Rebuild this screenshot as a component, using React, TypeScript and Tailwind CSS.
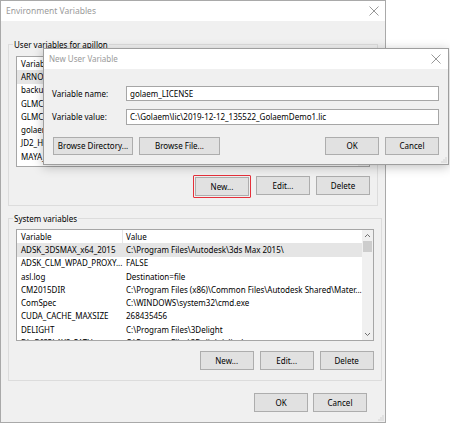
import React from 'react';

const font = { fontFamily: '"Noto Sans", "Segoe UI", Arial, sans-serif' };

type Row = { name: string; value: string };

const userRows: Row[] = [
  { name: 'ARNOLD_LICENSE', value: '5053@localhost' },
  { name: 'backup', value: 'D:\\backup' },
  { name: 'GLMCROWD_LICENSE', value: 'C:\\Golaem\\lic' },
  { name: 'GLMCROWD_HOME', value: 'C:\\Program Files\\Golaem' },
  { name: 'golaem_LICENSE', value: 'C:\\Golaem\\lic' },
  { name: 'JD2_HOME', value: 'C:\\Program Files\\JDownloader' },
  { name: 'MAYA_APP_DIR', value: 'C:\\Users\\apillon\\Documents\\maya' },
  { name: 'MAYA_UI_USE_UBA_CELLS', value: '0' },
];

const systemRows: Row[] = [
  { name: 'ADSK_3DSMAX_x64_2015', value: 'C:\\Program Files\\Autodesk\\3ds Max 2015\\' },
  { name: 'ADSK_CLM_WPAD_PROXY...', value: 'FALSE' },
  { name: 'asl.log', value: 'Destination=file' },
  { name: 'CM2015DIR', value: 'C:\\Program Files (x86)\\Common Files\\Autodesk Shared\\Mater...' },
  { name: 'ComSpec', value: 'C:\\WINDOWS\\system32\\cmd.exe' },
  { name: 'CUDA_CACHE_MAXSIZE', value: '268435456' },
  { name: 'DELIGHT', value: 'C:\\Program Files\\3Delight' },
  { name: 'DL_DISPLAYS_PATH', value: 'C:\\Program Files\\3Delight\\displays' },
];

function CloseIcon() {
  return (
    <svg width="10" height="10" viewBox="0 0 10 10" className="text-[#8c8c8c]">
      <path d="M0.5 0.5 L9.5 9.5 M9.5 0.5 L0.5 9.5" stroke="currentColor" strokeWidth="0.9" fill="none" />
    </svg>
  );
}

function Grip({ className }: { className: string }) {
  return (
    <svg width="6" height="6" viewBox="0 0 6 6" className={className}>
      <rect x="4.5" y="0.5" width="1" height="1" fill="#b5b5b5" />
      <rect x="2.5" y="2.5" width="1" height="1" fill="#b5b5b5" />
      <rect x="4.5" y="2.5" width="1" height="1" fill="#b5b5b5" />
      <rect x="0.5" y="4.5" width="1" height="1" fill="#b5b5b5" />
      <rect x="2.5" y="4.5" width="1" height="1" fill="#b5b5b5" />
      <rect x="4.5" y="4.5" width="1" height="1" fill="#b5b5b5" />
    </svg>
  );
}

function Button({ label, className = '' }: { label: string; className?: string }) {
  return (
    <div
      className={`flex items-center justify-center bg-[#e1e1e1] border border-[#adadad] text-[8px] text-black ${className}`}
    >
      {label}
    </div>
  );
}

function Chevron({ up }: { up?: boolean }) {
  return (
    <svg width="7" height="5" viewBox="0 0 7 5">
      <path d={up ? 'M1 4 L3.5 1.5 L6 4' : 'M1 1 L3.5 3.5 L6 1'} stroke="#606060" strokeWidth="0.9" fill="none" />
    </svg>
  );
}

function VarList({ rows, height }: { rows: Row[]; height: string }) {
  return (
    <div className={`flex bg-white border border-[#a6a6a6] overflow-hidden ${height}`}>
      <div className="flex-1 flex flex-col overflow-hidden">
        <div className="flex h-[13.3px] items-center shrink-0">
          <div className="w-[106px] pl-[4px] h-full flex items-center border-r border-[#e5e5e5]">Variable</div>
          <div className="pl-[3px]">Value</div>
        </div>
        {rows.map((r, i) => (
          <div
            key={r.name}
            className={`flex h-[13.3px] items-center shrink-0 whitespace-nowrap ${i === 0 ? 'bg-[#e5e5e5]' : ''}`}
          >
            <div className="w-[106px] pl-[4px] overflow-hidden">{r.name}</div>
            <div className="pl-[3px]">{r.value}</div>
          </div>
        ))}
      </div>
      <div className="w-[11px] flex flex-col bg-[#f0f0f0] shrink-0">
        <div className="h-[11px] flex items-center justify-center">
          <Chevron up />
        </div>
        <div className="flex-1 flex flex-col items-center">
          <div className="w-[9px] h-[11px] bg-[#cdcdcd]" />
        </div>
        <div className="h-[11px] flex items-center justify-center">
          <Chevron />
        </div>
      </div>
    </div>
  );
}

function ButtonRow({ highlight }: { highlight?: boolean }) {
  return (
    <div className="flex justify-end gap-[6px]">
      {highlight ? (
        <div className="p-[1px] -m-[1px] border-[1.5px] border-[#e5303a] rounded-[1px]">
          <Button label="New..." className="w-[54px] h-[19px]" />
        </div>
      ) : (
        <Button label="New..." className="w-[54px] h-[19px]" />
      )}
      <Button label="Edit..." className="w-[54px] h-[19px]" />
      <Button label="Delete" className="w-[54px] h-[19px]" />
    </div>
  );
}

function NewUserVariableDialog() {
  return (
    <div className="absolute left-[43px] top-[48px] w-[406px] h-[117px] flex flex-col bg-[#f0f0f0] border border-[#9e9e9e] shadow-[0_2px_10px_rgba(0,0,0,0.25)]">
      <div className="h-[20px] bg-white flex items-center justify-between pl-[5px] pr-[7px] shrink-0">
        <span className="text-[#9a9a9a]">New User Variable</span>
        <CloseIcon />
      </div>
      <div className="flex flex-col pl-[8px] pr-[9px] pt-[17px]">
        <div className="flex items-center h-[15px]">
          <div className="w-[74px]">Variable name:</div>
          <div className="flex-1 h-full bg-white border border-[#a6a6a6] flex items-center pl-[3px]">golaem_LICENSE</div>
        </div>
        <div className="flex items-center h-[16px] mt-[8px]">
          <div className="w-[74px]">Variable value:</div>
          <div className="flex-1 h-full bg-white border border-[#a6a6a6] flex items-center pl-[3px]">
            C:\Golaem\lic\2019-12-12_135522_GolaemDemo1.lic
          </div>
        </div>
        <div className="flex mt-[12px] gap-[6px]">
          <Button label="Browse Directory..." className="w-[80px] h-[18px] ml-[1px]" />
          <Button label="Browse File..." className="w-[81px] h-[18px]" />
          <div className="flex-1" />
          <Button label="OK" className="w-[54px] h-[18px]" />
          <Button label="Cancel" className="w-[54px] h-[18px]" />
        </div>
      </div>
      <Grip className="absolute right-[1px] bottom-[1px]" />
    </div>
  );
}

export default function App() {
  return (
    <div className="relative w-[450px] h-[425px] bg-white text-[8px] text-black overflow-hidden" style={font}>
      <div className="relative w-[386px] h-[423px] flex flex-col bg-[#f0f0f0] border border-[#a9a9a9]">
        {/* Title bar */}
        <div className="h-[20px] bg-white flex items-center justify-between pl-[5px] pr-[6px] shrink-0">
          <span className="text-[#9a9a9a] text-[8.5px]">Environment Variables</span>
          <CloseIcon />
        </div>

        <div className="flex flex-col px-[7px] pt-[18px]">
          {/* User variables */}
          <fieldset className="border border-[#dcdcdc] px-[7px] pb-[8px]">
            <legend className="-ml-[3px] px-[1px] leading-[11px]">User variables for apillon</legend>
            <div className="mt-[6px]">
              <VarList rows={userRows} height="h-[111px]" />
            </div>
            <div className="mt-[9px]">
              <ButtonRow highlight />
            </div>
          </fieldset>

          {/* System variables */}
          <fieldset className="border border-[#dcdcdc] px-[7px] pb-[10px] mt-[7px]">
            <legend className="-ml-[3px] px-[1px] leading-[11px]">System variables</legend>
            <div className="mt-[5px]">
              <VarList rows={systemRows} height="h-[112px]" />
            </div>
            <div className="mt-[10px]">
              <ButtonRow />
            </div>
          </fieldset>

          <div className="flex justify-end gap-[5px] mt-[12px] pr-[11px]">
            <Button label="OK" className="w-[54px] h-[19px]" />
            <Button label="Cancel" className="w-[54px] h-[19px]" />
          </div>
        </div>
        <Grip className="absolute right-[1px] bottom-[1px]" />
      </div>

      <NewUserVariableDialog />
    </div>
  );
}
